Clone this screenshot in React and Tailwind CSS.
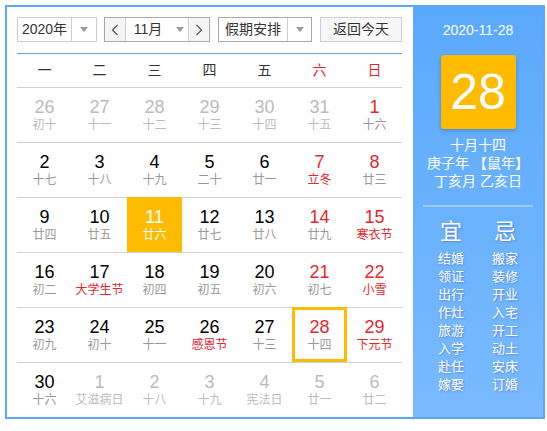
import React from 'react';

const font = { fontFamily: '"Liberation Sans", Arial, "Noto Sans CJK SC", sans-serif' };

// [day, lunar, muted, redNum, redLunar, flag]
const weeks = [
    [[26, '初十', 1], [27, '十一', 1], [28, '十二', 1], [29, '十三', 1], [30, '十四', 1], [31, '十五', 1], [1, '十六', 0, 1]],
    [[2, '十七'], [3, '十八'], [4, '十九'], [5, '二十'], [6, '廿一'], [7, '立冬', 0, 1, 1], [8, '廿三', 0, 1]],
    [[9, '廿四'], [10, '廿五'], [11, '廿六', 0, 0, 0, 'today'], [12, '廿七'], [13, '廿八'], [14, '廿九', 0, 1], [15, '寒衣节', 0, 1, 1]],
    [[16, '初二'], [17, '大学生节', 0, 0, 1], [18, '初四'], [19, '初五'], [20, '初六'], [21, '初七', 0, 1], [22, '小雪', 0, 1, 1]],
    [[23, '初九'], [24, '初十'], [25, '十一'], [26, '感恩节', 0, 0, 1], [27, '十三'], [28, '十四', 0, 1, 0, 'sel'], [29, '下元节', 0, 1, 1]],
    [[30, '十六'], [1, '艾滋病日', 1], [2, '十八', 1], [3, '十九', 1], [4, '宪法日', 1], [5, '廿一', 1], [6, '廿二', 1]],
];

const yi = ['结婚', '领证', '出行', '作灶', '旅游', '入学', '赴任', '嫁娶'];
const ji = ['搬家', '装修', '开业', '入宅', '开工', '动土', '安床', '订婚'];

const Caret = () => (
    <span className="w-0 h-0 border-l-[4px] border-r-[4px] border-t-[5px] border-l-transparent border-r-transparent border-t-[#999]"></span>
);

const Chevron = ({ dir }) => (
    <svg width="8" height="12" viewBox="0 0 8 12" fill="none" stroke="#555" strokeWidth="1.2">
        {dir === 'left' ? <polyline points="6.5,1 1.5,6 6.5,11" /> : <polyline points="1.5,1 6.5,6 1.5,11" />}
    </svg>
);

const DayCell = ({ d }) => {
    const [num, lunar, muted, redNum, redLunar, flag] = d;
    let numColor = muted ? 'text-[#bbb]' : redNum ? 'text-[#e8262d]' : 'text-black';
    let lunarColor = muted ? 'text-[#bbb]' : redLunar ? 'text-[#e8262d]' : 'text-[#999]';
    let box = 'border-t border-[#d0d0d0]';
    if (flag === 'today') {
        numColor = 'text-white';
        lunarColor = 'text-white';
        box = 'bg-[#ffbb00] border-t border-[#ffbb00]';
    }
    if (flag === 'sel') box = 'border-[3px] border-[#ffbb00]';
    return (
        <div className={`h-[55px] flex flex-col items-center justify-center ${box}`}>
            <div className={`text-[18px] leading-[20px] ${numColor}`}>{num}</div>
            <div className={`text-[12px] leading-[16px] whitespace-nowrap ${lunarColor}`}>{lunar}</div>
        </div>
    );
};

export default function App() {
    return (
        <div className="p-[5px] bg-white" style={font}>
            <div className="w-[540px] h-[414px] border-2 border-[#5aa8f8] flex">
                {/* Left calendar */}
                <div className="w-[406px] pl-[10px] pt-[10px]">
                    <div className="flex items-center h-[25px] text-[14px] text-[#333]">
                        <div className="flex h-full border border-[#cfcfcf]">
                            <div className="w-[54px] flex items-center justify-center border-r border-[#cfcfcf]">2020年</div>
                            <div className="w-[24px] flex items-center justify-center"><Caret /></div>
                        </div>
                        <div className="flex h-full border border-[#a8a8a8] ml-[7px]">
                            <div className="w-[21px] flex items-center justify-center bg-[#f5f5f5] border-r border-[#cfcfcf]"><Chevron dir="left" /></div>
                            <div className="w-[62px] flex items-center justify-center gap-[14px] pl-[4px]">
                                <span>11月</span><Caret />
                            </div>
                            <div className="w-[21px] flex items-center justify-center bg-[#f5f5f5] border-l border-[#cfcfcf]"><Chevron dir="right" /></div>
                        </div>
                        <div className="flex h-full border border-[#a8a8a8] ml-[8px]">
                            <div className="w-[69px] flex items-center justify-center border-r border-[#cfcfcf]">假期安排</div>
                            <div className="w-[23px] flex items-center justify-center"><Caret /></div>
                        </div>
                        <div className="w-[82px] h-full ml-[8px] flex items-center justify-center border border-[#cfcfcf] bg-[#f7f7f7]">返回今天</div>
                    </div>

                    <div className="w-[385px] mt-[11px] border-t border-[#5aa8f8]">
                        <div className="grid grid-cols-7 h-[33px] items-center text-center text-[14px]">
                            {['一', '二', '三', '四', '五'].map((w) => (
                                <div key={w} className="text-[#333]">{w}</div>
                            ))}
                            <div className="text-[#e8262d]">六</div>
                            <div className="text-[#e8262d]">日</div>
                        </div>
                        {weeks.map((row, i) => (
                            <div key={i} className="grid grid-cols-7">
                                {row.map((d, j) => <DayCell key={j} d={d} />)}
                            </div>
                        ))}
                    </div>
                </div>

                {/* Right info panel */}
                <div className="w-[130px] h-full bg-gradient-to-b from-[#5aa9fd] to-[#79baff] text-white flex flex-col items-center">
                    <div className="shrink-0 mt-[13px] text-[14px] leading-[20px]">2020-11-28</div>
                    <div className="shrink-0 mt-[15px] w-[75px] h-[74px] bg-[#ffbb00] rounded-[3px] shadow-[0_2px_4px_rgba(0,0,0,0.2)] flex items-center justify-center text-[50px] leading-none">28</div>
                    <div className="shrink-0 mt-[7px] text-[14px] leading-[18px] text-center whitespace-nowrap">
                        <div>十月十四</div>
                        <div>庚子年 【鼠年】</div>
                        <div>丁亥月 乙亥日</div>
                    </div>
                    <div className="shrink-0 mt-[15px] w-[110px] h-[2px] bg-[#9ccbff]"></div>
                    <div className="shrink-0 mt-[11px] flex gap-[28px] [text-shadow:1px_1px_2px_rgba(60,40,120,0.35)]">
                        <div className="flex flex-col items-center">
                            <div className="text-[22px] leading-[28px]">宜</div>
                            <div className="mt-[4px] text-[13px] leading-[18px] flex flex-col items-center whitespace-nowrap">
                                {yi.map((t) => <div key={t}>{t}</div>)}
                            </div>
                        </div>
                        <div className="flex flex-col items-center">
                            <div className="text-[22px] leading-[28px]">忌</div>
                            <div className="mt-[4px] text-[13px] leading-[18px] flex flex-col items-center whitespace-nowrap">
                                {ji.map((t) => <div key={t}>{t}</div>)}
                            </div>
                        </div>
                    </div>
                </div>
            </div>
        </div>
    );
}
